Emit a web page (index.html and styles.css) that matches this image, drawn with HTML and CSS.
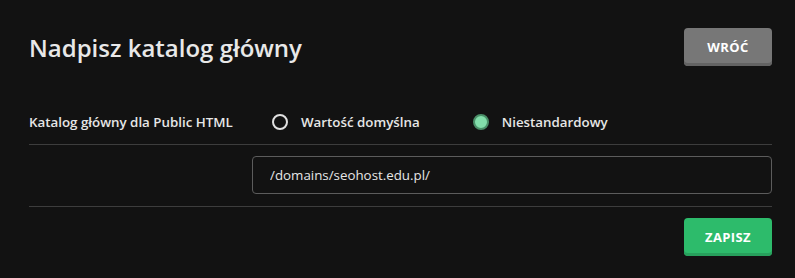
FILE: index.html
```html
<!DOCTYPE html>
<html lang="pl">
<head>
    <meta charset="UTF-8">
    <meta name="viewport" content="width=device-width, initial-scale=1.0">
    <title>Nadpisz katalog główny</title>
    <link rel="stylesheet" href="styles.css">
</head>
<body>
    <div class="panel">
        <div class="panel-header">
            <h2>Nadpisz katalog główny</h2>
            <button class="btn btn-grey">Wróć</button>
        </div>
        <form>
            <div class="form-row">
                <div class="row-label">Katalog główny dla Public HTML</div>
                <div class="row-content">
                    <label class="radio">
                        <input type="radio" name="docroot" value="default" />
                        <span class="radio-mark"></span>
                        Wartość domyślna
                    </label>
                    <label class="radio">
                        <input type="radio" name="docroot" value="custom" checked />
                        <span class="radio-mark"></span>
                        Niestandardowy
                    </label>
                </div>
            </div>
            <div class="form-row form-row-input">
                <div class="row-label"></div>
                <div class="row-content">
                    <input type="text" name="path" class="input-field" value="/domains/seohost.edu.pl/" />
                </div>
            </div>
            <div class="panel-footer">
                <button type="submit" class="btn btn-green">Zapisz</button>
            </div>
        </form>
    </div>
</body>
</html>
```

FILE: styles.css
```css
body {
    margin: 0;
    background-color: #121212;
    font-family: "Open Sans", "Liberation Sans", sans-serif;
    color: #e6e6e6;
}
.panel {
    width: 743px;
    padding: 28px 0 0 29px;
}
.panel-header {
    display: flex;
    justify-content: space-between;
    align-items: center;
    margin-bottom: 34px;
}
.panel-header h2 {
    margin: 0;
    font-size: 24px;
    font-weight: 600;
    color: #e8e8e8;
}
.btn {
    width: 88px;
    height: 38px;
    border: none;
    border-radius: 4px;
    font-family: inherit;
    font-size: 13px;
    font-weight: 700;
    letter-spacing: 0.4px;
    text-transform: uppercase;
    color: #fff;
    cursor: pointer;
}
.btn-grey {
    background-color: #777;
    box-shadow: inset 0 -3px 0 #636363;
}
.btn-green {
    background-color: #2dbb6b;
    box-shadow: inset 0 -3px 0 #27a05c;
}
.form-row {
    display: flex;
    align-items: center;
    padding: 12px 0;
    border-bottom: 1px solid #3d3d3d;
    height: 20px;
}
.form-row-input {
    height: 38px;
    padding: 11px 0 12px;
}
.row-label {
    width: 223px;
    font-size: 13.33px;
    font-weight: 600;
    color: #e6e6e6;
}
.row-content {
    flex: 1;
    display: flex;
    align-items: center;
}
.radio {
    display: flex;
    align-items: center;
    margin-left: 20px;
    margin-right: 33px;
    font-size: 13.33px;
    font-weight: 600;
    color: #e6e6e6;
    cursor: pointer;
}
.radio input {
    display: none;
}
.radio-mark {
    width: 12px;
    height: 12px;
    border: 2px solid #e0e0e0;
    border-radius: 50%;
    margin-right: 13px;
}
.radio input:checked + .radio-mark {
    background-color: #82deaa;
    border-color: #4a8f68;
}
.input-field {
    width: 100%;
    height: 38px;
    box-sizing: border-box;
    padding: 0 17px;
    background-color: #121212;
    border: 1px solid #5c5c5c;
    border-radius: 4px;
    font-family: inherit;
    font-size: 13.33px;
    color: #e6e6e6;
    outline: none;
}
.panel-footer {
    display: flex;
    justify-content: flex-end;
    padding-top: 11px;
}
```
